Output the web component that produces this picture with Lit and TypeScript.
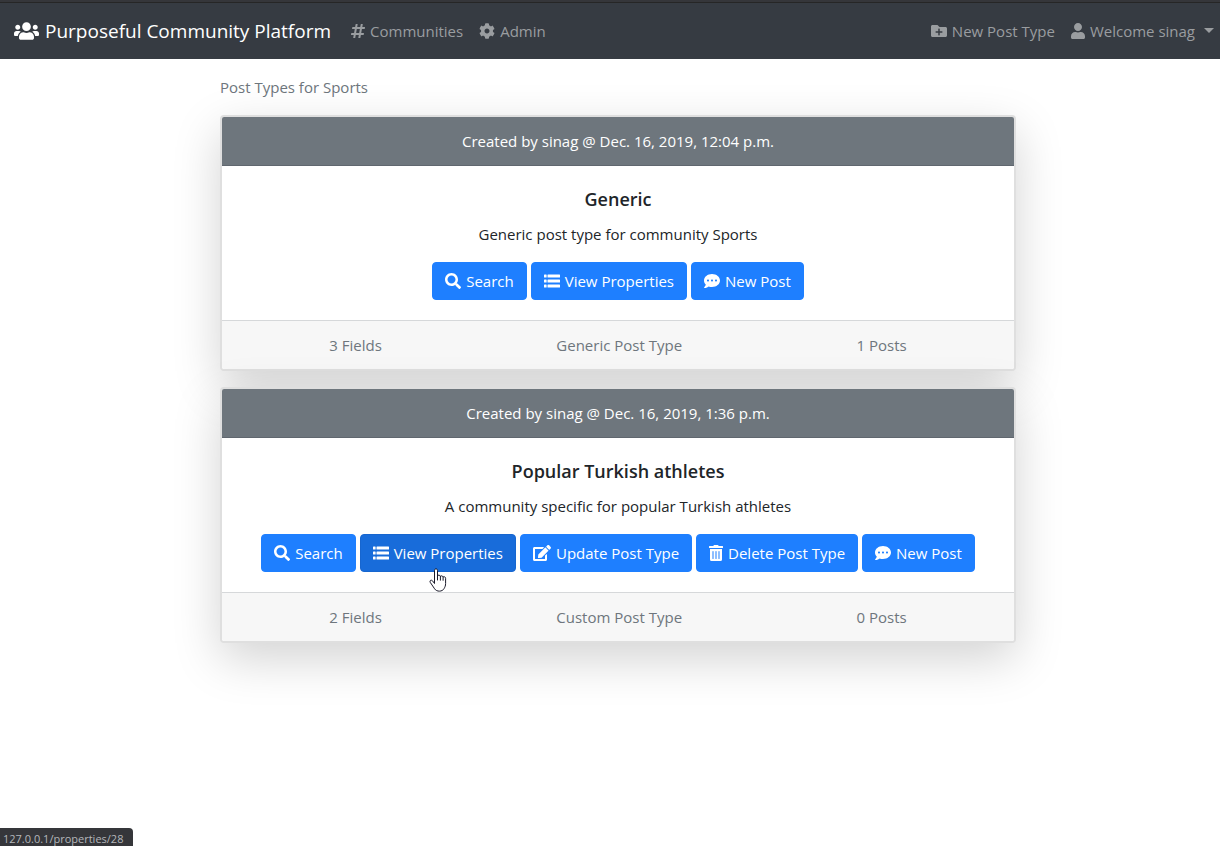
import { LitElement, html, css, svg } from "lit";
import { customElement, property } from "lit/decorators.js";
import { classMap } from "lit/directives/class-map.js";

interface Glyph { w: number; d: string; }

const GLYPHS: Record<string, Glyph> = {
  users: { w: 640, d: "M96 224c35.3 0 64-28.7 64-64s-28.7-64-64-64-64 28.7-64 64 28.7 64 64 64zm448 0c35.3 0 64-28.7 64-64s-28.7-64-64-64-64 28.7-64 64 28.7 64 64 64zm32 32h-64c-17.6 0-33.5 7.1-45.1 18.6 40.3 22.1 68.9 62 75.1 109.4h66c17.7 0 32-14.3 32-32v-32c0-35.3-28.7-64-64-64zm-256 0c61.9 0 112-50.1 112-112S381.9 32 320 32 208 82.1 208 144s50.1 112 112 112zm76.8 32h-8.3c-20.8 10-43.9 16-68.5 16s-47.6-6-68.5-16h-8.3C179.6 288 128 339.6 128 403.2V432c0 26.5 21.5 48 48 48h288c26.5 0 48-21.5 48-48v-28.8c0-63.6-51.6-115.2-115.2-115.2zm-223.7-13.4C161.5 263.1 145.6 256 128 256H64c-35.3 0-64 28.7-64 64v32c0 17.7 14.3 32 32 32h65.9c6.3-47.4 34.9-87.3 75.2-109.4z" },
  hashtag: { w: 448, d: "M440.667 182.109l7.143-40c1.313-7.355-4.342-14.109-11.813-14.109h-74.81l14.623-81.891C377.123 38.754 371.468 32 363.997 32h-40.632a12 12 0 0 0-11.813 9.891L296.175 128H197.54l14.623-81.891C213.477 38.754 207.822 32 200.35 32h-40.632a12 12 0 0 0-11.813 9.891L132.528 128H53.432a12 12 0 0 0-11.813 9.891l-7.143 40C33.163 185.246 38.818 192 46.289 192h74.81L98.242 320H19.146a12 12 0 0 0-11.813 9.891l-7.143 40C-1.123 377.246 4.532 384 12.003 384h74.81L72.19 465.891C70.877 473.246 76.532 480 84.003 480h40.632a12 12 0 0 0 11.813-9.891L151.826 384h98.634l-14.623 81.891C234.523 473.246 240.178 480 247.65 480h40.632a12 12 0 0 0 11.813-9.891L315.472 384h79.096a12 12 0 0 0 11.813-9.891l7.143-40c1.313-7.355-4.342-14.109-11.813-14.109h-74.81l22.857-128h79.096a12 12 0 0 0 11.813-9.891zM261.889 320h-98.634l22.857-128h98.634l-22.857 128z" },
  cog: { w: 512, d: "M487.4 315.7l-42.6-24.6c4.3-23.2 4.3-47 0-70.2l42.6-24.6c4.9-2.8 7.1-8.6 5.5-14-11.1-35.6-30-67.8-54.7-94.6-3.8-4.1-10-5.1-14.8-2.3L380.8 110c-17.9-15.4-38.5-27.3-60.8-35.1V25.8c0-5.6-3.9-10.5-9.4-11.7-36.7-8.2-74.3-7.8-109.2 0-5.5 1.2-9.4 6.1-9.4 11.7V75c-22.2 7.9-42.8 19.8-60.8 35.1L88.7 85.5c-4.9-2.8-11-1.9-14.8 2.3-24.7 26.7-43.6 58.9-54.7 94.6-1.7 5.4.6 11.2 5.5 14L67.3 221c-4.3 23.2-4.3 47 0 70.2l-42.6 24.6c-4.9 2.8-7.1 8.6-5.5 14 11.1 35.6 30 67.8 54.7 94.6 3.8 4.1 10 5.1 14.8 2.3l42.6-24.6c17.9 15.4 38.5 27.3 60.8 35.1v49.2c0 5.6 3.9 10.5 9.4 11.7 36.7 8.2 74.3 7.8 109.2 0 5.5-1.2 9.4-6.1 9.4-11.7v-49.2c22.2-7.9 42.8-19.8 60.8-35.1l42.6 24.6c4.9 2.8 11 1.9 14.8-2.3 24.7-26.7 43.6-58.9 54.7-94.6 1.5-5.5-.7-11.3-5.6-14.1zM256 336c-44.1 0-80-35.9-80-80s35.9-80 80-80 80 35.9 80 80-35.9 80-80 80z" },
  folderPlus: { w: 512, d: "M464 128H272l-64-64H48C21.49 64 0 85.49 0 112v288c0 26.51 21.49 48 48 48h416c26.51 0 48-21.49 48-48V176c0-26.51-21.49-48-48-48zm-96 168c0 8.84-7.16 16-16 16h-72v72c0 8.84-7.16 16-16 16h-16c-8.84 0-16-7.16-16-16v-72h-72c-8.84 0-16-7.16-16-16v-16c0-8.84 7.16-16 16-16h72v-72c0-8.84 7.16-16 16-16h16c8.84 0 16 7.16 16 16v72h72c8.84 0 16 7.16 16 16v16z" },
  user: { w: 448, d: "M224 256c70.7 0 128-57.3 128-128S294.7 0 224 0 96 57.3 96 128s57.3 128 128 128zm89.6 32h-16.7c-22.2 10.2-46.9 16-72.9 16s-50.6-5.8-72.9-16h-16.7C60.2 288 0 348.2 0 422.4V464c0 26.5 21.5 48 48 48h352c26.5 0 48-21.5 48-48v-41.6c0-74.2-60.2-134.4-134.4-134.4z" },
  search: { w: 512, d: "M505 442.7L405.3 343c-4.5-4.5-10.6-7-17-7H372c27.6-35.3 44-79.7 44-128C416 93.1 322.9 0 208 0S0 93.1 0 208s93.1 208 208 208c48.3 0 92.7-16.4 128-44v16.3c0 6.4 2.5 12.5 7 17l99.7 99.7c9.4 9.4 24.6 9.4 33.9 0l28.3-28.3c9.4-9.4 9.4-24.6.1-34zM208 336c-70.7 0-128-57.2-128-128 0-70.7 57.2-128 128-128 70.7 0 128 57.2 128 128 0 70.7-57.2 128-128 128z" },
  list: { w: 512, d: "M12 48h60q12 0 12 12v72q0 12-12 12H12q-12 0-12-12V60q0-12 12-12zM12 208h60q12 0 12 12v72q0 12-12 12H12q-12 0-12-12V220q0-12 12-12zM12 368h60q12 0 12 12v72q0 12-12 12H12q-12 0-12-12V380q0-12 12-12zM124 48h376q12 0 12 12v72q0 12-12 12H124q-12 0-12-12V60q0-12 12-12zM124 208h376q12 0 12 12v72q0 12-12 12H124q-12 0-12-12V220q0-12 12-12zM124 368h376q12 0 12 12v72q0 12-12 12H124q-12 0-12-12V380q0-12 12-12z" },
  commentDots: { w: 512, d: "M256 32C114.6 32 0 125.1 0 240c0 49.6 21.4 95 57 130.7C44.5 421.1 2.7 466 2.2 466.5c-2.2 2.3-2.8 5.7-1.5 8.7S4.8 480 8 480c66.3 0 116-31.8 140.6-51.4 32.7 12.3 69 19.4 107.4 19.4 141.4 0 256-93.1 256-208S397.4 32 256 32zM128 272c-17.7 0-32-14.3-32-32s14.3-32 32-32 32 14.3 32 32-14.3 32-32 32zm128 0c-17.7 0-32-14.3-32-32s14.3-32 32-32 32 14.3 32 32-14.3 32-32 32zm128 0c-17.7 0-32-14.3-32-32s14.3-32 32-32 32 14.3 32 32-14.3 32-32 32z" },
  edit: { w: 576, d: "M402.6 83.2l90.2 90.2c3.8 3.8 3.8 10 0 13.8L274.4 405.6l-92.8 10.3c-12.4 1.4-22.9-9.1-21.5-21.5l10.3-92.8L388.8 83.2c3.8-3.8 10-3.8 13.8 0zm162-22.9l-48.8-48.8c-15.2-15.2-39.9-15.2-55.2 0l-35.4 35.4c-3.8 3.8-3.8 10 0 13.8l90.2 90.2c3.8 3.8 10 3.8 13.8 0l35.4-35.4c15.2-15.3 15.2-40 0-55.2zM384 346.2V448H64V128h229.8c3.2 0 6.2-1.3 8.5-3.5l40-40c7.6-7.6 2.2-20.5-8.5-20.5H48C21.5 64 0 85.5 0 112v352c0 26.5 21.5 48 48 48h352c26.5 0 48-21.5 48-48V306.2c0-10.7-12.9-16-20.5-8.5l-40 40c-2.2 2.3-3.5 5.3-3.5 8.5z" },
  trash: { w: 448, d: "M32 464a48 48 0 0 0 48 48h288a48 48 0 0 0 48-48V128H32zm272-256a16 16 0 0 1 32 0v224a16 16 0 0 1-32 0zm-96 0a16 16 0 0 1 32 0v224a16 16 0 0 1-32 0zm-96 0a16 16 0 0 1 32 0v224a16 16 0 0 1-32 0zM432 32H312l-9.4-18.7A24 24 0 0 0 281.1 0H166.8a23.72 23.72 0 0 0-21.4 13.3L136 32H16A16 16 0 0 0 0 48v32a16 16 0 0 0 16 16h416a16 16 0 0 0 16-16V48a16 16 0 0 0-16-16z" },
};

const icon = (name: string, size = 16) => {
  const g = GLYPHS[name];
  return html`<svg class="icon" aria-hidden="true" width=${(g.w / 512) * size} height=${size}
    viewBox="0 0 ${g.w} 512">${svg`<path d=${g.d} fill="currentColor" />`}</svg>`;
};

interface Action { icon: string; label: string; hovered?: boolean; }
interface PostType {
  created: string; name: string; description: string;
  actions: Action[]; stats: string[];
}

const SEARCH: Action = { icon: "search", label: "Search" };
const VIEW: Action = { icon: "list", label: "View Properties" };
const NEW_POST: Action = { icon: "commentDots", label: "New Post" };

const POST_TYPES: PostType[] = [
  {
    created: "Created by sinag @ Dec. 16, 2019, 12:04 p.m.",
    name: "Generic",
    description: "Generic post type for community Sports",
    actions: [SEARCH, VIEW, NEW_POST],
    stats: ["3 Fields", "Generic Post Type", "1 Posts"],
  },
  {
    created: "Created by sinag @ Dec. 16, 2019, 1:36 p.m.",
    name: "Popular Turkish athletes",
    description: "A community specific for popular Turkish athletes",
    actions: [
      SEARCH,
      { ...VIEW, hovered: true },
      { icon: "edit", label: "Update Post Type" },
      { icon: "trash", label: "Delete Post Type" },
      NEW_POST,
    ],
    stats: ["2 Fields", "Custom Post Type", "0 Posts"],
  },
];

@customElement("post-type-card")
export class PostTypeCard extends LitElement {
  @property({ attribute: false }) item!: PostType;

  static styles = css`
    :host { display: block; }
    .card {
      border: 2px solid #dfdfdf;
      border-radius: 4px;
      background: #fff;
      box-shadow: 0 16px 48px rgba(0, 0, 0, 0.175);
      text-align: center;
    }
    .head {
      padding: 12px 20px;
      color: #fff;
      background: #6e767d;
      border-bottom: 1px solid #60676f;
      border-radius: 2px 2px 0 0;
    }
    .body { padding: 20px; }
    .title { margin: 0 0 10px; font-size: 18px; line-height: 26px; font-weight: 600; }
    .text { margin: 0 0 16px; }
    .actions { display: flex; flex-wrap: wrap; justify-content: center; gap: 4px; }
    .btn {
      display: inline-flex;
      align-items: center;
      gap: 5px;
      padding: 6px 12px;
      border: 1px solid #1e7fff;
      border-radius: 4px;
      background: #1e7fff;
      color: #fff;
      text-decoration: none;
    }
    .btn:hover, .btn.hovered { background: #186cda; border-color: #1766cf; }
    .icon { flex: none; }
    .foot {
      display: flex;
      justify-content: space-around;
      padding: 12px 20px;
      color: #6e767d;
      background: #f7f7f7;
      border-top: 1px solid #d6d8da;
      border-radius: 0 0 2px 2px;
    }
    .action { position: relative; display: flex; }
    .pointer { position: absolute; left: 69px; top: 34px; z-index: 1; pointer-events: none; }
  `;

  render() {
    const { created, name, description, actions, stats } = this.item;
    return html`
      <article class="card">
        <header class="head">${created}</header>
        <div class="body">
          <h5 class="title">${name}</h5>
          <p class="text">${description}</p>
          <div class="actions">
            ${actions.map((a) => html`
              <div class="action">
                <a href="#" class=${classMap({ btn: true, hovered: !!a.hovered })}>${icon(a.icon)}<span>${a.label}</span></a>
                ${a.hovered ? html`
                  <svg class="pointer" aria-hidden="true" width="18" height="25" viewBox="0 0 18 25">
                    <path d="M5.5 15.5V2.6c0-2.3 3-2.3 3 0V8c.3-1.3 2.6-1.2 2.8.4.6-1 2.5-.7 2.7.7.7-.8 2.6-.4 2.6 1.2v5.2c0 2.2-.6 3.4-1.4 4.9-1.8 3.6-7.6 3.6-9.6.4L1.2 14.3c-.9-1.8 1-2.8 2.3-1.5z" fill="#fff" stroke="#1b1b2b" stroke-linejoin="round" />
                    <path d="M8.5 7.5v4.5M11.4 8.5v3.7M14.1 9.3v3" fill="none" stroke="#1b1b2b" stroke-linecap="round" />
                  </svg>` : ""}
              </div>`)}
          </div>
        </div>
        <footer class="foot">${stats.map((s) => html`<span>${s}</span>`)}</footer>
      </article>
    `;
  }
}

@customElement("app-root")
export class AppRoot extends LitElement {
  static styles = css`
    :host {
      display: block;
      min-height: 100vh;
      background: #fff;
      color: #212529;
      font: 15px/24px "Open Sans", "Noto Sans", sans-serif;
    }
    .navbar {
      display: flex;
      align-items: center;
      justify-content: space-between;
      box-sizing: border-box;
      min-height: 59px;
      padding: 2px 6px 2px 14px;
      background: #363b42;
      border-top: 2px solid #35363a;
      box-shadow: inset 0 1px #262626;
    }
    .group { display: flex; align-items: center; gap: 16px; }
    .link { display: flex; align-items: center; gap: 5px; color: #9a9da0; text-decoration: none; }
    .brand {
      display: flex;
      align-items: center;
      gap: 6px;
      margin-right: 4px;
      color: #fff;
      font-size: 19px;
      line-height: 30px;
      text-decoration: none;
    }
    .icon { flex: none; }
    .caret {
      margin-left: 4px;
      border: 5px solid transparent;
      border-top-color: currentColor;
      border-bottom: 0;
    }
    .page { display: grid; grid-template-columns: 220fr 796fr 204fr; padding: 16px 0; }
    .content { grid-column: 2; display: flex; flex-direction: column; gap: 16px; }
    .crumb { margin: 0; color: #6e767d; }
    .status {
      position: fixed;
      left: 0;
      bottom: 0;
      padding: 3px 10px 0 3px;
      background: #35363a;
      border-top-right-radius: 4px;
      color: #b4b7ba;
      font-size: 11px;
      line-height: 15px;
    }
  `;

  render() {
    return html`
      <nav class="navbar">
        <div class="group">
          <a class="brand" href="#">${icon("users", 20)}<span>Purposeful Community Platform</span></a>
          <a class="link" href="#">${icon("hashtag")}<span>Communities</span></a>
          <a class="link" href="#">${icon("cog")}<span>Admin</span></a>
        </div>
        <div class="group">
          <a class="link" href="#">${icon("folderPlus")}<span>New Post Type</span></a>
          <a class="link" href="#">${icon("user")}<span>Welcome sinag</span><span class="caret"></span></a>
        </div>
      </nav>
      <main class="page">
        <div class="content">
          <p class="crumb">Post Types for Sports</p>
          ${POST_TYPES.map((item) => html`<post-type-card .item=${item}></post-type-card>`)}
        </div>
      </main>
      <div class="status">127.0.0.1/properties/28</div>
    `;
  }
}
